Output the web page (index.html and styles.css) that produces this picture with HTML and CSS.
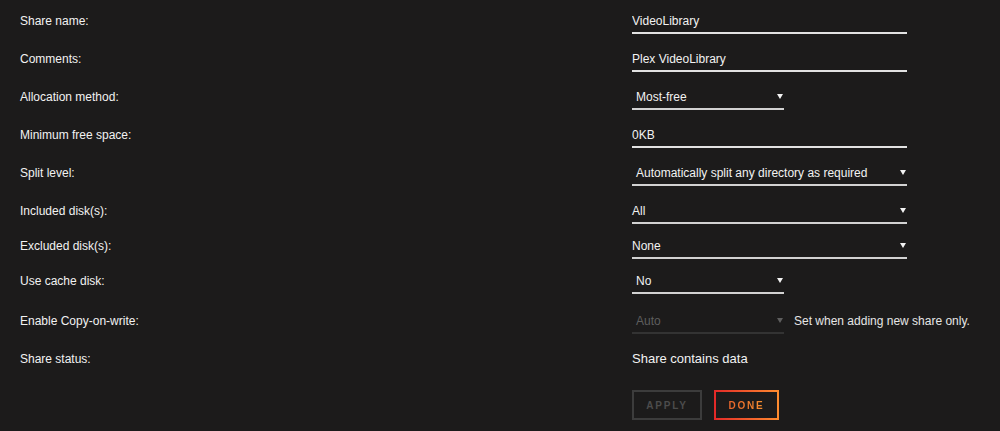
FILE: index.html
```html
<!DOCTYPE html>
<html lang="en">
<head>
<meta charset="utf-8">
<title>Share settings</title>
<link rel="stylesheet" href="styles.css">
</head>
<body>
<form class="share-form">
  <div class="row h38">
    <div class="label">Share name:</div>
    <div class="field"><input class="text-input" type="text" value="VideoLibrary"></div>
  </div>
  <div class="row h38">
    <div class="label">Comments:</div>
    <div class="field"><input class="text-input" type="text" value="Plex VideoLibrary"></div>
  </div>
  <div class="row h38">
    <div class="label">Allocation method:</div>
    <div class="field"><div class="select narrow padded"><span>Most-free</span></div></div>
  </div>
  <div class="row h38">
    <div class="label">Minimum free space:</div>
    <div class="field"><input class="text-input" type="text" value="0KB"></div>
  </div>
  <div class="row h38">
    <div class="label">Split level:</div>
    <div class="field"><div class="select wide padded"><span>Automatically split any directory as required</span></div></div>
  </div>
  <div class="row h35">
    <div class="label">Included disk(s):</div>
    <div class="field"><div class="select wide"><span>All</span></div></div>
  </div>
  <div class="row h35">
    <div class="label">Excluded disk(s):</div>
    <div class="field"><div class="select wide"><span>None</span></div></div>
  </div>
  <div class="row h40">
    <div class="label">Use cache disk:</div>
    <div class="field"><div class="select narrow padded"><span>No</span></div></div>
  </div>
  <div class="row h38">
    <div class="label">Enable Copy-on-write:</div>
    <div class="field inline">
      <div class="select narrow padded disabled"><span>Auto</span></div>
      <span class="hint">Set when adding new share only.</span>
    </div>
  </div>
  <div class="row h38">
    <div class="label">Share status:</div>
    <div class="field"><div class="status">Share contains data</div></div>
  </div>
  <div class="row actions">
    <div class="label"></div>
    <div class="field buttons">
      <button type="button" class="btn btn-disabled" disabled>Apply</button>
      <button type="button" class="btn btn-primary"><span>Done</span></button>
    </div>
  </div>
</form>
</body>
</html>
```

FILE: styles.css
```css
html, body {
  margin: 0;
  padding: 0;
  background: #1c1b1b;
}

body {
  font-family: "Liberation Sans", Arial, sans-serif;
  font-size: 12px;
  color: #f2f2f2;
}

.share-form {
  padding-left: 20px;
}

.row {
  display: flex;
  align-items: flex-start;
}

.h38 { height: 38px; }
.h35 { height: 35px; }
.h40 { height: 40px; }

.label {
  width: 612px;
  flex: none;
  padding-top: 13px;
  line-height: 16px;
  color: #f2f2f2;
}

.field {
  display: flex;
  align-items: flex-start;
}

.field.inline {
  gap: 10px;
}

.text-input {
  display: block;
  box-sizing: content-box;
  width: 275px;
  height: 16px;
  margin: 0;
  padding: 13px 0 3px 0;
  border: 0;
  border-bottom: 2px solid #e2e2e2;
  background: transparent;
  color: #f2f2f2;
  font: inherit;
  line-height: 16px;
  outline: none;
}

.select {
  position: relative;
  box-sizing: border-box;
  padding: 13px 14px 3px 0;
  line-height: 16px;
  border-bottom: 2px solid #d2d2d2;
  color: #f2f2f2;
  white-space: nowrap;
}

.select.padded {
  padding-left: 4px;
}

.select.narrow { width: 152px; }
.select.wide { width: 275px; }

.select::after {
  content: "";
  position: absolute;
  right: 1px;
  top: 18px;
  width: 0;
  height: 0;
  border-left: 3px solid transparent;
  border-right: 3px solid transparent;
  border-top: 5px solid #f2f2f2;
}

.select.disabled {
  color: #5e5e5e;
  border-bottom-color: #333;
}

.select.disabled::after {
  border-top-color: #5e5e5e;
}

.hint {
  padding-top: 13px;
  line-height: 16px;
  color: #e6e6e6;
}

.status {
  padding-top: 13px;
  line-height: 16px;
  font-size: 13px;
  color: #f2f2f2;
}

.actions {
  margin-top: 14px;
}

.buttons {
  gap: 12px;
}

.btn {
  box-sizing: border-box;
  height: 30px;
  margin: 0;
  padding: 0;
  border: 2px solid #3c3c3c;
  background: transparent;
  font-family: "Liberation Sans", Arial, sans-serif;
  font-size: 10px;
  font-weight: bold;
  letter-spacing: 1.8px;
  text-transform: uppercase;
  cursor: pointer;
}

.btn-disabled {
  width: 70px;
  color: #4c4c4c;
  cursor: default;
}

.btn-primary {
  width: 65px;
  border: 2px solid transparent;
  background:
    linear-gradient(#1c1b1b, #1c1b1b) padding-box,
    linear-gradient(90deg, #e22828, #ff8c2f) border-box;
}

.btn-primary span {
  background: linear-gradient(90deg, #e8632b, #f68f2f);
  -webkit-background-clip: text;
  background-clip: text;
  color: transparent;
}
```
